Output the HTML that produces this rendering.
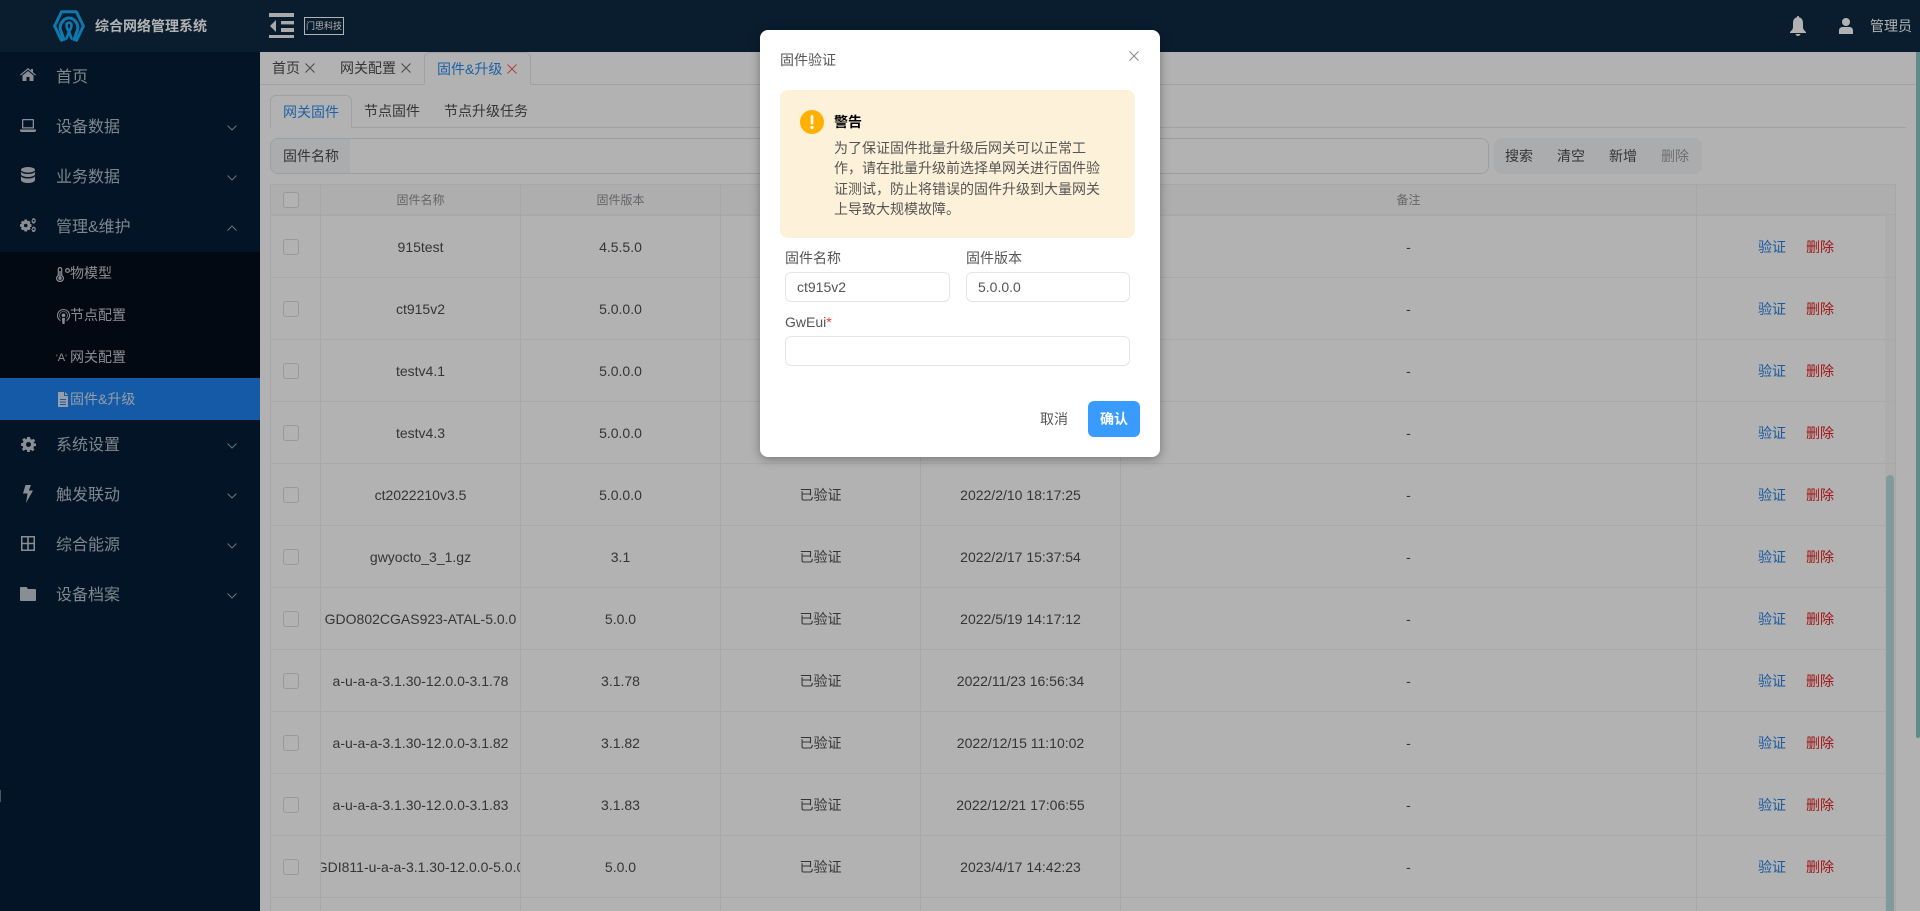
<!DOCTYPE html>
<html lang="zh-CN">
<head>
<meta charset="utf-8">
<title>综合网络管理系统</title>
<style>
*{box-sizing:border-box;margin:0;padding:0}
html,body{width:1920px;height:911px;overflow:hidden;background:#fff}
body{font-family:"Liberation Sans","Noto Sans CJK SC",sans-serif;font-size:14px;color:#555;position:relative}
.a{position:absolute}
.t{position:absolute;white-space:nowrap;line-height:20px}
#hd{left:0;top:0;width:1920px;height:52px;background:#0f2a42}
#sb{left:0;top:52px;width:260px;height:859px;background:#031d36}
.mi{position:absolute;left:0;width:260px;height:50px}
.mi .t{left:56px;top:15px;font-size:16px;color:#b6c0cb}
.mi svg.ic{position:absolute;left:20px;fill:#c6cad0}
.mi svg.ch{position:absolute;left:227px;top:22px;width:10px;height:6px;fill:none;stroke:#9aa3ad;stroke-width:1}
#sub{left:0;top:252px;width:260px;height:168px;background:#050e1a}
.si{position:absolute;left:0;width:260px;height:42px}
.si .t{left:70px;top:11px;color:#c5ccd3}
.si svg{position:absolute;fill:#c5ccd3}
.tab{color:#4d4d4d}
.x{position:absolute;width:10px;height:10px;stroke:#666;stroke-width:1;fill:none}
.line{position:absolute;background:#e4e7ed;height:1px}
.vl{position:absolute;width:1px;top:184px;height:727px;background:#eef0f3}
.hl{position:absolute;left:270px;width:1626px;height:1px;background:#f3f3f4}
.cb{position:absolute;left:283px;width:16px;height:16px;border:1px solid #d9dbe0;border-radius:3px;background:#fff}
.c{position:absolute;height:20px;line-height:20px;display:flex;justify-content:center;white-space:nowrap;overflow:hidden;color:#4d4d4d}
.c1{left:321px;width:199px}
.c2{left:521px;width:199px}
.c3{left:721px;width:199px}
.c4{left:921px;width:199px}
.c5{left:1121px;width:575px}
.v{position:absolute;left:1758px;color:#2680e8;line-height:20px}
.d{position:absolute;left:1806px;color:#e82020;line-height:20px}
.th{position:absolute;top:190px;height:20px;line-height:20px;font-size:12px;color:#8f9195;display:flex;justify-content:center}
#ov{left:0;top:0;width:1920px;height:911px;background:rgba(0,0,0,.3)}
#m{left:760px;top:30px;width:400px;height:427px;background:#fff;border-radius:8px;box-shadow:0 2px 10px rgba(0,0,0,.35)}
.inp{position:absolute;height:30px;border:1px solid #e3e5e8;border-radius:6px;background:#fff;color:#555;line-height:28px;padding-left:11px}
</style>
</head>
<body>
<!-- header -->
<div class="a" id="hd"></div>
<svg class="a" style="left:53px;top:10px" width="32" height="32" viewBox="0 0 32 32" fill="none" stroke="#13aef9" stroke-width="3" stroke-linejoin="round" stroke-linecap="round">
<path d="M8.500 30.400 1.600 16 8.600 1.800H23.400L30.400 16 23.500 30.400"/>
<path d="M11 29.500 7.500 20C6 15 10 8 16 8 22 8 26 15 24.500 20L21 29.500"/>
<path d="M13.500 28.500 16 21.500C19 17.500 19.500 13 16 12.500 12.500 13 13 17.500 16 21.500L18.500 28.500" stroke-width="2.600"/>
</svg>
<div class="t" style="left:95px;top:16px;font-weight:bold;color:#fff">综合网络管理系统</div>
<svg class="a" style="left:269px;top:13px" width="26" height="25" viewBox="0 0 26 25" fill="#f2f4f6">
<rect x="0" y="0" width="25" height="4"/><rect x="12" y="8" width="13" height="3.400"/><rect x="12" y="15" width="13" height="4"/><rect x="0" y="22" width="25" height="3"/><path d="M7 7V19L1 13Z"/>
</svg>
<div class="a" style="left:304px;top:17px;width:40px;height:18px;border:1px solid #fff;color:#fff;font-size:9px;line-height:16px;text-align:center;white-space:nowrap">门思科技</div>
<svg class="a" style="left:1790px;top:16px" width="16" height="20" viewBox="0 0 16 20" fill="#fff">
<path d="M8 0C8.800 0 9.200.6 9.200 1.400 11.800 2 13 4.200 13 7V11C13 13.500 14.500 14.500 16 16V17H0V16C1.500 14.500 3 13.500 3 11V7C3 4.200 4.200 2 6.800 1.400 6.800.6 7.200 0 8 0Z"/><path d="M5.500 18H10.500C10 19.400 9.200 20 8 20S6 19.400 5.500 18Z"/>
</svg>
<svg class="a" style="left:1839px;top:18px" width="14" height="16" viewBox="0 0 14 16" fill="#fff">
<circle cx="7" cy="4" r="4"/><path d="M0 16V12.500C0 10.500 1.500 9 3.500 9H10.500C12.500 9 14 10.500 14 12.500V16Z"/>
</svg>
<div class="t" style="left:1870px;top:16px;color:#fff">管理员</div>

<!-- sidebar -->
<div class="a" id="sb"></div>
<div class="a" id="sub"></div>
<div class="a" style="left:0;top:378px;width:260px;height:42px;background:#1d81ef"></div>

<div class="mi" style="top:53px"><svg class="ic" style="top:15px" width="16" height="13" viewBox="0 0 16 13"><path d="M8 0 11 2.500V1H13V4.200L16 6.800 15.200 7.600 8 1.600.8 7.600 0 6.800ZM2.500 7.500 8 3 13.500 7.500V13H9.500V9H6.500V13H2.500Z"/></svg><div class="t">首页</div></div>

<div class="mi" style="top:103px"><svg class="ic" style="top:16px" width="16" height="13" viewBox="0 0 16 13"><path fill-rule="evenodd" d="M3 0H13C13.600 0 14 .4 14 1V9.500H2V1C2 .4 2.400 0 3 0ZM3.300 1.300V8.200H12.700V1.300Z"/><path d="M0 10.500H16V11.500C16 12.300 15.400 13 14.500 13H1.500C.6 13 0 12.300 0 11.500Z"/></svg><div class="t">设备数据</div><svg class="ch" viewBox="0 0 10 6"><path d="M.5.5 5 5 9.500.5"/></svg></div>

<div class="mi" style="top:153px"><svg class="ic" style="left:21px;top:14px" width="14" height="16" viewBox="0 0 14 16"><ellipse cx="7" cy="2.800" rx="7" ry="2.800"/><path d="M0 4.600C1 6.300 3.800 7 7 7S13 6.300 14 4.600V7.200C14 8.600 11 10 7 10S0 8.600 0 7.200ZM0 9.200C1 10.800 3.800 11.500 7 11.500S13 10.800 14 9.200V13C14 14.700 11 16 7 16S0 14.700 0 13Z"/></svg><div class="t">业务数据</div><svg class="ch" viewBox="0 0 10 6"><path d="M.5.5 5 5 9.500.5"/></svg></div>

<div class="mi" style="top:203px"><svg class="ic" style="top:15px" width="16" height="14" viewBox="0 0 16 14"><path fill-rule="evenodd" d="M4.500 1.500H7L7.400 3.300 9 2.700 10.600 4.300 9.800 5.800 11.500 6.300V8.700L9.800 9.200 10.600 10.700 9 12.300 7.400 11.700 7 13.500H4.500L4.100 11.700 2.500 12.300.9 10.700 1.700 9.200 0 8.700V6.300L1.700 5.800.9 4.300 2.500 2.700 4.100 3.300ZM5.750 5.700A1.800 1.800 0 1 0 5.750 9.300 1.800 1.800 0 0 0 5.750 5.700Z"/><path fill-rule="evenodd" d="M13.500 0 14.500 .6 15.500 1 15.500 2.200 16 3.200 15.200 4.200 14.500 5.500 13.500 5.500 12.300 5.200 12 4 11.300 3 12 2 12.300.8ZM13.600 1.800A1 1 0 1 0 13.600 3.800 1 1 0 0 0 13.600 1.800ZM13.500 8.500 14.500 9 15.500 9.500 15.500 10.700 16 11.700 15.200 12.700 14.500 14 13.500 14 12.300 13.700 12 12.500 11.300 11.500 12 10.500 12.300 9.300ZM13.600 10.300A1 1 0 1 0 13.600 12.300 1 1 0 0 0 13.600 10.300Z"/></svg><div class="t">管理&amp;维护</div><svg class="ch" viewBox="0 0 10 6"><path d="M.5 5.500 5 1 9.500 5.500"/></svg></div>

<div class="si" style="top:252px"><svg style="left:56px;top:15px" width="8" height="15" viewBox="0 0 8 15"><path fill-rule="evenodd" d="M4 0C5.400 0 6.300 1 6.300 2.200V8.300C7.300 9 8 10.100 8 11.200 8 13.300 6.200 15 4 15S0 13.300 0 11.200C0 10.100.7 9 1.700 8.300V2.200C1.700 1 2.600 0 4 0ZM4 1.200C3.300 1.200 2.900 1.700 2.900 2.200V9C1.900 9.500 1.200 10.300 1.200 11.200 1.200 12.700 2.500 13.800 4 13.800S6.800 12.700 6.800 11.200C6.800 10.300 6.100 9.500 5.100 9V2.200C5.100 1.700 4.700 1.200 4 1.200Z"/><path d="M3.300 4H4.700V10H3.300Z"/><circle cx="4" cy="11.200" r="1.700"/></svg><svg style="left:65px;top:16px" width="5" height="5" viewBox="0 0 5 5"><path fill-rule="evenodd" d="M2.500 0A2.500 2.500 0 1 0 2.500 5 2.500 2.500 0 0 0 2.500 0ZM2.500 1.200A1.300 1.300 0 1 1 2.500 3.800 1.300 1.300 0 0 1 2.500 1.200Z"/></svg><div class="t">物模型</div></div>

<div class="si" style="top:294px"><svg style="left:57px;top:15px" width="13" height="15" viewBox="0 0 13 15"><path fill-rule="evenodd" d="M6.500 0A6.500 6.500 0 0 1 9.500 12.300V11C11 10 12 8.300 12 6.500A5.500 5.500 0 0 0 1 6.500C1 8.300 2 10 3.500 11V12.300A6.500 6.500 0 0 1 6.500 0ZM6.500 2.200A4.300 4.300 0 0 1 9.500 9.600V8.200C10 7.600 10.300 7.100 10.300 6.500A3.800 3.800 0 0 0 2.700 6.500C2.700 7.100 3 7.600 3.500 8.200V9.600A4.300 4.300 0 0 1 6.500 2.200Z"/><circle cx="6.500" cy="6.300" r="1.800"/><path d="M5 9H8L7.500 15H5.500Z"/></svg><div class="t">节点配置</div></div>

<div class="si" style="top:336px"><div class="t" style="left:56px;top:12px;font-size:11px;line-height:20px;color:#c5ccd3"><span style="font-size:9px">'</span>A<span style="font-size:9px">'</span></div><div class="t">网关配置</div></div>

<div class="si" style="top:378px"><svg style="left:58px;top:14px;fill:#d6e2f2" width="10" height="15" viewBox="0 0 10 15"><path fill-rule="evenodd" d="M0 0H6V4H10V15H0ZM7 0 10 3H7ZM2 7V8H8V7ZM2 9.500V10.500H8V9.500ZM2 12V13H8V12Z"/></svg><div class="t" style="color:#d6e2f2">固件&amp;升级</div></div>

<div class="mi" style="top:421px"><svg class="ic" style="left:21px;top:16px" width="15" height="15" viewBox="0 0 15 15"><path fill-rule="evenodd" d="M6 0H9L9.400 2 11 2.700 12.800 1.700 14.300 3.900 12.700 5.200 13 6.300 15 6.500V9L13 9.300 12.400 11 13.500 12.800 11.300 14.300 10 12.800 9 13.100 8.800 15H6.200L6 13.100 4.300 12.500 2.700 14 .8 12 2.200 10.500 1.800 9.100 0 8.800V6.200L1.900 5.900 2.500 4.400 1.200 2.800 3.200 .9 4.800 2.200 5.800 1.900ZM7.500 5A2.500 2.500 0 1 0 7.500 10 2.500 2.500 0 0 0 7.500 5Z"/></svg><div class="t">系统设置</div><svg class="ch" viewBox="0 0 10 6"><path d="M.5.5 5 5 9.500.5"/></svg></div>

<div class="mi" style="top:471px"><svg class="ic" style="left:23px;top:14px" width="10" height="18" viewBox="0 0 10 18"><path d="M2.500 0H8L5.800 5.500H10L3 18 4.500 8.500H0Z"/></svg><div class="t">触发联动</div><svg class="ch" viewBox="0 0 10 6"><path d="M.5.5 5 5 9.500.5"/></svg></div>

<div class="mi" style="top:521px"><svg class="ic" style="left:21px;top:15px" width="14" height="15" viewBox="0 0 14 15"><path fill-rule="evenodd" d="M0 0H14V15H0ZM1.500 1.500V6.800H6.200V1.500ZM7.800 1.500V6.800H12.500V1.500ZM1.500 8.200V13.500H6.200V8.200ZM7.800 8.200V13.500H12.500V8.200Z"/></svg><div class="t">综合能源</div><svg class="ch" viewBox="0 0 10 6"><path d="M.5.5 5 5 9.500.5"/></svg></div>

<div class="mi" style="top:571px"><svg class="ic" style="top:16px" width="16" height="14" viewBox="0 0 16 14"><path d="M1 0H6C6.500 0 7 .3 7.200 .8L8 2H15C15.600 2 16 2.400 16 3V13C16 13.600 15.600 14 15 14H1C.4 14 0 13.600 0 13V1C0 .4.4 0 1 0Z"/></svg><div class="t">设备档案</div><svg class="ch" viewBox="0 0 10 6"><path d="M.5.5 5 5 9.500.5"/></svg></div>

<div class="a" style="left:0;top:790px;width:1px;height:12px;background:#777"></div>

<!-- tabs -->
<div class="line" style="left:260px;top:84px;width:1656px"></div>
<div class="t tab" style="left:272px;top:58px">首页</div>
<svg class="x" style="left:305px;top:63px" viewBox="0 0 10 10"><path d="M.5.5 9.500 9.500M9.500.5.5 9.500"/></svg>
<div class="t tab" style="left:340px;top:58px">网关配置</div>
<svg class="x" style="left:401px;top:63px" viewBox="0 0 10 10"><path d="M.5.5 9.500 9.500M9.500.5.5 9.500"/></svg>
<div class="a" style="left:424px;top:52px;width:107px;height:33px;border:1px solid #e4e7ed;border-bottom:1px solid #fff;border-radius:6px 6px 0 0;background:#fff"></div>
<div class="t" style="left:437px;top:59px;color:#2d8cf0">固件&amp;升级</div>
<svg class="x" style="left:507px;top:64px;stroke:#ff5a5a" viewBox="0 0 10 10"><path d="M.5.5 9.500 9.500M9.500.5.5 9.500"/></svg>

<div class="line" style="left:270px;top:127px;width:1636px"></div>
<div class="a" style="left:270px;top:95px;width:82px;height:33px;border:1px solid #e4e7ed;border-bottom:1px solid #fff;border-radius:6px 6px 0 0;background:#fff"></div>
<div class="t" style="left:283px;top:102px;color:#2d8cf0">网关固件</div>
<div class="t tab" style="left:364px;top:101px">节点固件</div>
<div class="t tab" style="left:444px;top:101px">节点升级任务</div>

<!-- search -->
<div class="a" style="left:270px;top:138px;width:1219px;height:36px;border:1px solid #e1e3e8;border-radius:8px;overflow:hidden"><div style="width:79px;height:34px;background:#f5f6f9"></div></div>
<div class="t" style="left:283px;top:146px;color:#4d4d4d">固件名称</div>
<div class="a" style="left:1494px;top:138px;width:208px;height:36px;background:#f5f6f9;border-radius:8px"></div>
<div class="t tab" style="left:1505px;top:146px">搜索</div>
<div class="t tab" style="left:1557px;top:146px">清空</div>
<div class="t tab" style="left:1609px;top:146px">新增</div>
<div class="t" style="left:1661px;top:146px;color:#a0a0a0">删除</div>

<!-- table -->
<div class="a" style="left:270px;top:184px;width:1626px;height:31px;background:#fafafa;border-top:1px solid #f0f0f2"></div>
<div class="a" style="left:270px;top:214px;width:1626px;height:2px;background:#f2f2f3"></div>
<div class="a" style="left:1885px;top:215px;width:11px;height:696px;background:#f8f8f8"></div>
<div class="vl" style="left:270px"></div><div class="vl" style="left:320px"></div><div class="vl" style="left:520px"></div><div class="vl" style="left:720px"></div><div class="vl" style="left:920px"></div><div class="vl" style="left:1120px"></div><div class="vl" style="left:1696px"></div><div class="vl" style="left:1895px"></div>
<div class="hl" style="top:277px"></div><div class="hl" style="top:339px"></div><div class="hl" style="top:401px"></div><div class="hl" style="top:463px"></div><div class="hl" style="top:525px"></div><div class="hl" style="top:587px"></div><div class="hl" style="top:649px"></div><div class="hl" style="top:711px"></div><div class="hl" style="top:773px"></div><div class="hl" style="top:835px"></div><div class="hl" style="top:897px"></div>

<div class="cb" style="top:192px"></div>
<div class="th c1">固件名称</div>
<div class="th c2">固件版本</div>
<div class="th c3">验证状态</div>
<div class="th c4">创建时间</div>
<div class="th c5">备注</div>

<div class="cb" style="top:239px"></div><div class="c c1" style="top:237px">915test</div><div class="c c2" style="top:237px">4.5.5.0</div><div class="c c5" style="top:237px">-</div><div class="v" style="top:237px">验证</div><div class="d" style="top:237px">删除</div>
<div class="cb" style="top:301px"></div><div class="c c1" style="top:299px">ct915v2</div><div class="c c2" style="top:299px">5.0.0.0</div><div class="c c5" style="top:299px">-</div><div class="v" style="top:299px">验证</div><div class="d" style="top:299px">删除</div>
<div class="cb" style="top:363px"></div><div class="c c1" style="top:361px">testv4.1</div><div class="c c2" style="top:361px">5.0.0.0</div><div class="c c5" style="top:361px">-</div><div class="v" style="top:361px">验证</div><div class="d" style="top:361px">删除</div>
<div class="cb" style="top:425px"></div><div class="c c1" style="top:423px">testv4.3</div><div class="c c2" style="top:423px">5.0.0.0</div><div class="c c5" style="top:423px">-</div><div class="v" style="top:423px">验证</div><div class="d" style="top:423px">删除</div>
<div class="cb" style="top:487px"></div><div class="c c1" style="top:485px">ct2022210v3.5</div><div class="c c2" style="top:485px">5.0.0.0</div><div class="c c3" style="top:485px">已验证</div><div class="c c4" style="top:485px">2022/2/10 18:17:25</div><div class="c c5" style="top:485px">-</div><div class="v" style="top:485px">验证</div><div class="d" style="top:485px">删除</div>
<div class="cb" style="top:549px"></div><div class="c c1" style="top:547px">gwyocto_3_1.gz</div><div class="c c2" style="top:547px">3.1</div><div class="c c3" style="top:547px">已验证</div><div class="c c4" style="top:547px">2022/2/17 15:37:54</div><div class="c c5" style="top:547px">-</div><div class="v" style="top:547px">验证</div><div class="d" style="top:547px">删除</div>
<div class="cb" style="top:611px"></div><div class="c c1" style="top:609px">GDO802CGAS923-ATAL-5.0.0</div><div class="c c2" style="top:609px">5.0.0</div><div class="c c3" style="top:609px">已验证</div><div class="c c4" style="top:609px">2022/5/19 14:17:12</div><div class="c c5" style="top:609px">-</div><div class="v" style="top:609px">验证</div><div class="d" style="top:609px">删除</div>
<div class="cb" style="top:673px"></div><div class="c c1" style="top:671px">a-u-a-a-3.1.30-12.0.0-3.1.78</div><div class="c c2" style="top:671px">3.1.78</div><div class="c c3" style="top:671px">已验证</div><div class="c c4" style="top:671px">2022/11/23 16:56:34</div><div class="c c5" style="top:671px">-</div><div class="v" style="top:671px">验证</div><div class="d" style="top:671px">删除</div>
<div class="cb" style="top:735px"></div><div class="c c1" style="top:733px">a-u-a-a-3.1.30-12.0.0-3.1.82</div><div class="c c2" style="top:733px">3.1.82</div><div class="c c3" style="top:733px">已验证</div><div class="c c4" style="top:733px">2022/12/15 11:10:02</div><div class="c c5" style="top:733px">-</div><div class="v" style="top:733px">验证</div><div class="d" style="top:733px">删除</div>
<div class="cb" style="top:797px"></div><div class="c c1" style="top:795px">a-u-a-a-3.1.30-12.0.0-3.1.83</div><div class="c c2" style="top:795px">3.1.83</div><div class="c c3" style="top:795px">已验证</div><div class="c c4" style="top:795px">2022/12/21 17:06:55</div><div class="c c5" style="top:795px">-</div><div class="v" style="top:795px">验证</div><div class="d" style="top:795px">删除</div>
<div class="cb" style="top:859px"></div><div class="c c1" style="top:857px">GDI811-u-a-a-3.1.30-12.0.0-5.0.0</div><div class="c c2" style="top:857px">5.0.0</div><div class="c c3" style="top:857px">已验证</div><div class="c c4" style="top:857px">2023/4/17 14:42:23</div><div class="c c5" style="top:857px">-</div><div class="v" style="top:857px">验证</div><div class="d" style="top:857px">删除</div>

<!-- scrollbars -->
<div class="a" style="left:1886px;top:475px;width:8px;height:436px;background:#baddde;border-radius:4px 4px 0 0"></div>
<div class="a" style="left:1916px;top:52px;width:4px;height:686px;background:#88c8c5;border-radius:0 0 2px 2px"></div>

<!-- overlay -->
<div class="a" id="ov"></div>

<!-- modal -->
<div class="a" id="m">
  <div class="t" style="left:20px;top:20px;color:#555">固件验证</div>
  <svg class="x" style="left:369px;top:21px;stroke:#888" viewBox="0 0 10 10"><path d="M.5.5 9.500 9.500M9.500.5.5 9.500"/></svg>
  <div class="a" style="left:20px;top:60px;width:355px;height:148px;background:#fdf1d9;border-radius:8px"></div>
  <svg class="a" style="left:40px;top:80px" width="24" height="24" viewBox="0 0 24 24"><circle cx="12" cy="12" r="12" fill="#ffb000"/><rect x="10.700" y="5" width="2.600" height="9.500" rx="1.300" fill="#fff"/><circle cx="12" cy="17.500" r="1.600" fill="#fff"/></svg>
  <div class="t" style="left:74px;top:82px;font-weight:bold;color:#000">警告</div>
  <div class="t" style="left:74px;top:108px;line-height:20.3px;color:#555">为了保证固件批量升级后网关可以正常工<br>作，请在批量升级前选择单网关进行固件验<br>证测试，防止将错误的固件升级到大量网关<br>上导致大规模故障。</div>
  <div class="t" style="left:25px;top:218px">固件名称</div>
  <div class="t" style="left:206px;top:218px">固件版本</div>
  <div class="inp" style="left:25px;top:242px;width:165px">ct915v2</div>
  <div class="inp" style="left:206px;top:242px;width:164px">5.0.0.0</div>
  <div class="t" style="left:25px;top:282px">GwEui<span style="color:#f33">*</span></div>
  <div class="inp" style="left:25px;top:306px;width:345px"></div>
  <div class="t" style="left:280px;top:379px;color:#555">取消</div>
  <div class="a" style="left:328px;top:371px;width:52px;height:36px;background:#3a9bff;border-radius:6px;color:#fff;font-weight:bold;text-align:center;line-height:36px">确认</div>
</div>
</body>
</html>
